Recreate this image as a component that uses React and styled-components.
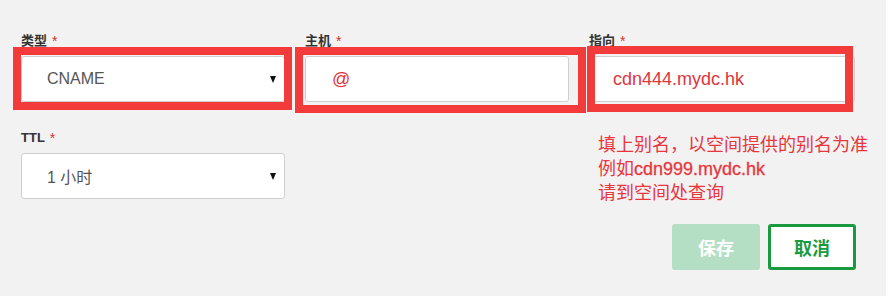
import React from 'react';
import styled, { createGlobalStyle } from 'styled-components';

const GlobalStyle = createGlobalStyle`
    html, body {
        margin: 0;
        padding: 0;
        background: #ffffff;
    }
    body {
        font-family: "Liberation Sans", "Noto Sans CJK SC", sans-serif;
    }
`;

const Page = styled.div`
    width: 886px;
    height: 296px;
    box-sizing: border-box;
    background: #f2f2f2;
    padding: 33px 0 0 21px;
    overflow: hidden;
`;

const Grid = styled.div`
    display: grid;
    grid-template-columns: 264px 264px 266px;
    column-gap: 20px;
    row-gap: 28px;
    align-items: start;
`;

const Field = styled.div`
    display: flex;
    flex-direction: column;
`;

const Label = styled.label`
    height: 16px;
    font-size: 13px;
    line-height: 16px;
    font-weight: bold;
    color: #333;
    margin-bottom: 7px;

    span {
        color: #d9302c;
        font-weight: normal;
        font-size: 14px;
        line-height: 16px;
        vertical-align: top;
        margin-left: 5px;
    }
`;

const Marked = styled.div`
    position: relative;
`;

const Frame = styled.div`
    position: absolute;
    top: ${p => p.$t}px;
    left: ${p => p.$l}px;
    right: ${p => p.$r}px;
    bottom: ${p => p.$b}px;
    border: 8px solid #f33b3b;
    pointer-events: none;
`;

const SelectBox = styled.div`
    height: 46px;
    box-sizing: border-box;
    background: #fff;
    border: 1px solid #cfcfcf;
    border-radius: 3px;
    display: flex;
    align-items: center;
    justify-content: space-between;
    padding: 0 8px 0 25px;
    font-size: 16px;
    color: #555;
`;

const Arrow = styled.i`
    width: 0;
    height: 0;
    border-left: 3.5px solid transparent;
    border-right: 3.5px solid transparent;
    border-top: 7px solid #111;
`;

const TextInput = styled.input`
    display: block;
    width: ${p => p.$w || 264}px;
    height: 46px;
    box-sizing: border-box;
    background: #fff;
    border: 1px solid #cfcfcf;
    border-radius: 3px;
    padding: 0 0 0 ${p => p.$pad}px;
    font-family: inherit;
    font-size: ${p => p.$size}px;
    color: #e0353c;
    outline: none;
`;

const Hint = styled.div`
    color: #e8363d;
    font-size: 18px;
    line-height: 24px;
    padding: 3px 0 0 9px;
    white-space: nowrap;

    b {
        font-weight: normal;
        -webkit-text-stroke: 0.3px #e8363d;
    }
`;

const Actions = styled.div`
    display: flex;
    justify-content: flex-end;
    gap: 8px;
    margin-top: 19px;
    margin-right: -1px;
`;

const Button = styled.button`
    width: 88px;
    height: 46px;
    box-sizing: border-box;
    border-radius: 3px;
    font-family: inherit;
    font-size: 18px;
    font-weight: bold;
    cursor: pointer;
    background: ${p => (p.$primary ? '#b4dfc4' : '#fff')};
    color: ${p => (p.$primary ? '#fff' : '#1a9a3f')};
    border: ${p => (p.$primary ? '0' : '3px solid #1a9a3f')};
`;

const App = () => {
    return (
        <>
            <GlobalStyle />
            <Page>
                <Grid>
                    <Field>
                        <Label>类型<span>*</span></Label>
                        <Marked>
                            <SelectBox>
                                CNAME
                                <Arrow />
                            </SelectBox>
                            <Frame $t={-9} $l={-8} $r={-7} $b={-8} />
                        </Marked>
                    </Field>
                    <Field>
                        <Label>主机<span>*</span></Label>
                        <Marked>
                            <TextInput defaultValue="@" $pad={26} $size={18} readOnly />
                            <Frame $t={-9} $l={-10} $r={-17} $b={-11} />
                        </Marked>
                    </Field>
                    <Field>
                        <Label>指向<span>*</span></Label>
                        <Marked>
                            <TextInput defaultValue="cdn444.mydc.hk" $pad={23} $size={18} $w={266} readOnly />
                            <Frame $t={-10} $l={-2} $r={2} $b={-10} />
                        </Marked>
                    </Field>
                    <Field>
                        <Label>TTL<span>*</span></Label>
                        <SelectBox>
                            1 小时
                            <Arrow />
                        </SelectBox>
                    </Field>
                    <div />
                    <div>
                        <Hint>
                            填上别名，以空间提供的别名为准<br />
                            例如<b>cdn999.mydc.hk</b><br />
                            请到空间处查询
                        </Hint>
                        <Actions>
                            <Button $primary>保存</Button>
                            <Button>取消</Button>
                        </Actions>
                    </div>
                </Grid>
            </Page>
        </>
    );
};

export default App;
